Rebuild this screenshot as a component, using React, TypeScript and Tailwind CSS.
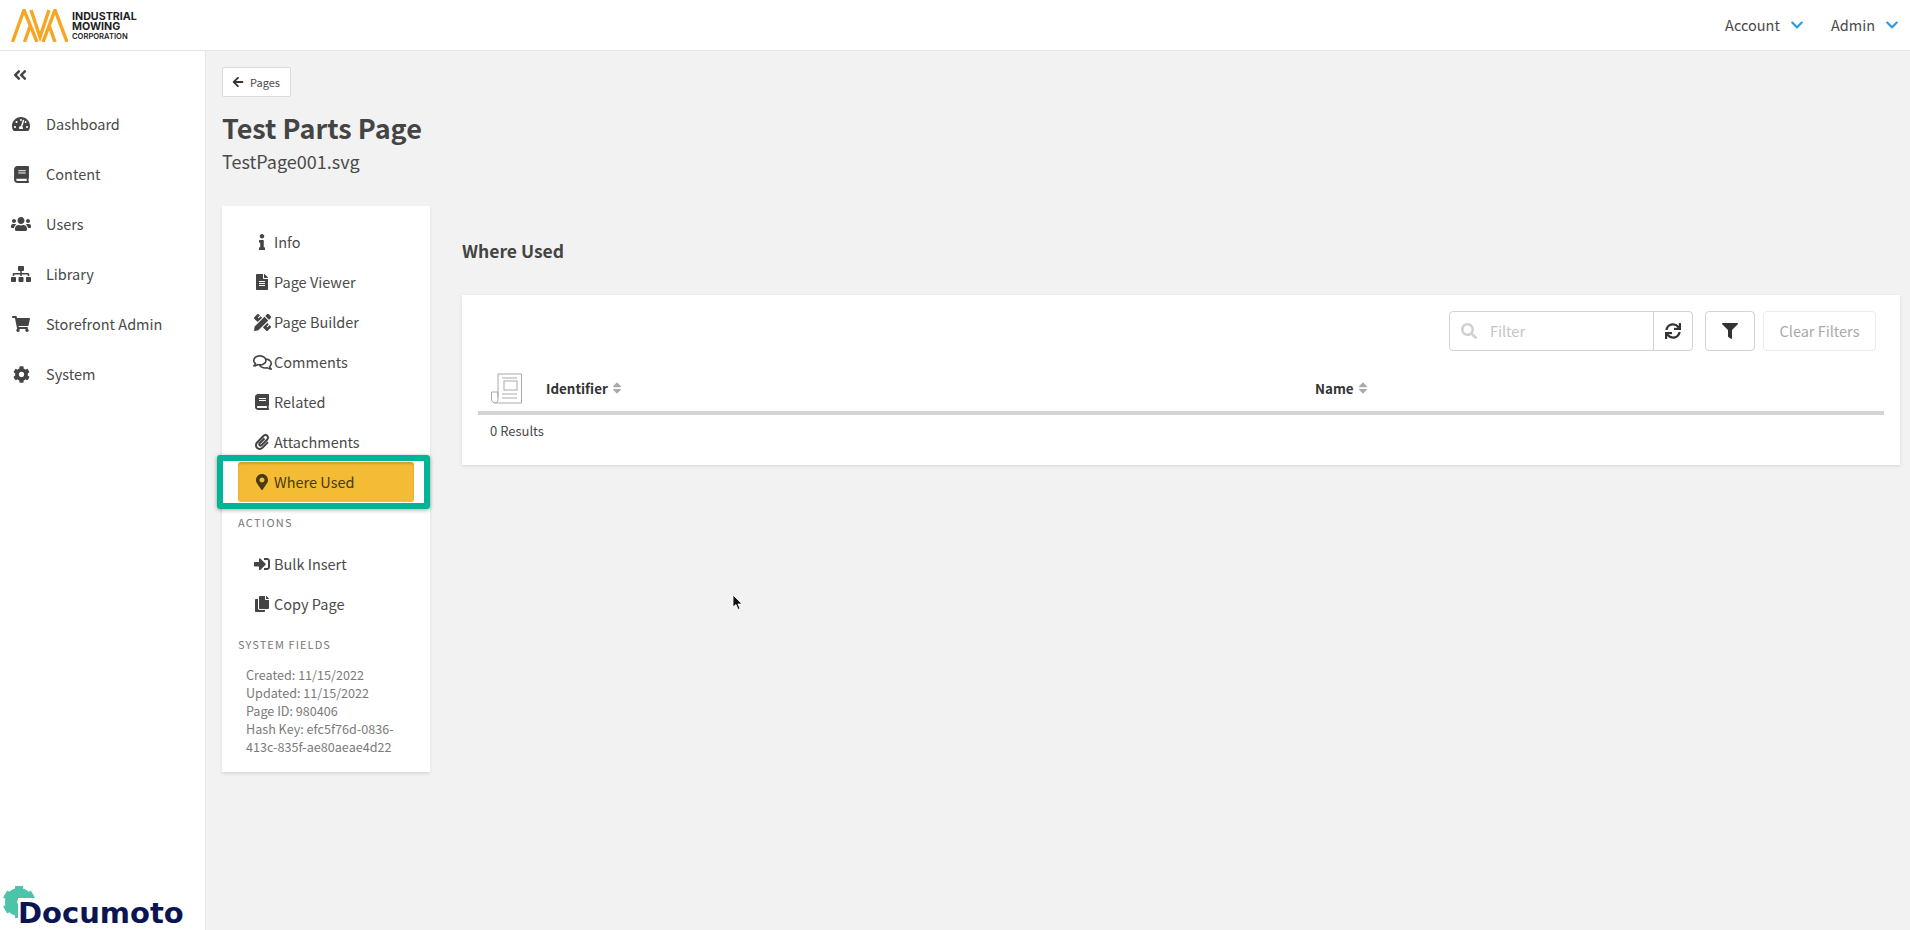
import React from "react"
import {
  FaAngleDoubleLeft,
  FaArrowLeft,
  FaBook,
  FaChevronDown,
  FaCog,
  FaCopy,
  FaFileAlt,
  FaFilter,
  FaInfo,
  FaMapMarkerAlt,
  FaPaperclip,
  FaPencilRuler,
  FaRegComments,
  FaSearch,
  FaShoppingCart,
  FaSignInAlt,
  FaSitemap,
  FaSort,
  FaSync,
  FaTachometerAlt,
  FaUsers,
} from "react-icons/fa"

const navItems = [
  { label: "Dashboard", icon: FaTachometerAlt, size: "text-[18px]" },
  { label: "Content", icon: FaBook, size: "text-[17px]" },
  { label: "Users", icon: FaUsers, size: "text-[20px]" },
  { label: "Library", icon: FaSitemap, size: "text-[20px]" },
  { label: "Storefront Admin", icon: FaShoppingCart, size: "text-[18px]" },
  { label: "System", icon: FaCog, size: "text-[17px]" },
]

const pageItems = [
  { label: "Info", icon: FaInfo, size: "text-[16px]" },
  { label: "Page Viewer", icon: FaFileAlt, size: "text-[16px]" },
  { label: "Page Builder", icon: FaPencilRuler, size: "text-[17px]" },
  { label: "Comments", icon: FaRegComments, size: "text-[19px]" },
  { label: "Related", icon: FaBook, size: "text-[16px]" },
  { label: "Attachments", icon: FaPaperclip, size: "text-[16px]" },
]

const MenuRow: React.FC<{ label: string; icon: React.ElementType; size: string }> = ({ label, icon: Icon, size }) => (
  <div className="flex h-10 items-center pl-[30px]">
    <span className="flex w-5 justify-center text-[#444]">
      <Icon className={size} />
    </span>
    <span className="ml-0.5 text-[14.5px] text-[#4a4a4a]">{label}</span>
  </div>
)

const IndustrialLogo = () => (
  <div className="ml-[11px] flex items-center">
    <svg width="57" height="33" viewBox="11 8 57 33" fill="none" stroke="#f5a623" strokeWidth="3.4">
      <path d="M12.5 41 L24 9 L37 41" />
      <path d="M24.5 41 L30.5 24" />
      <path d="M31 9 L40 36 L49 9" />
      <path d="M43 41 L55 9 L67 41" />
      <path d="M55 41 L49 24" />
    </svg>
    <div className="mt-[2px] ml-[4px] font-['Inter',sans-serif] text-[#222]">
      <div className="text-[10.7px] leading-[11px] font-bold">INDUSTRIAL</div>
      <div className="text-[10.7px] leading-[10px] font-bold">MOWING</div>
      <div className="text-[7.6px] leading-[9px] font-semibold">CORPORATION</div>
    </div>
  </div>
)

const DocumotoLogo = () => (
  <div className="relative ml-[18px] h-[34px]">
    <svg className="absolute top-[-11px] left-[-15px]" width="34" height="34" viewBox="0 0 34 34" fill="#4cc4a9">
      <circle cx="16" cy="17" r="8" fill="none" stroke="#4cc4a9" strokeWidth="12" />
      <rect x="12" y="1" width="8" height="5" />
      <rect x="12" y="1" width="8" height="5" transform="rotate(60 16 17)" />
      <rect x="12" y="1" width="8" height="5" transform="rotate(300 16 17)" />
      <rect x="12" y="1" width="8" height="5" transform="rotate(240 16 17)" />
      <rect x="12" y="1" width="8" height="5" transform="rotate(180 16 17)" />
      <rect x="15" y="13" width="19" height="21" fill="#fff" />
    </svg>
    <span className="relative font-['DejaVu_Sans',sans-serif] text-[29px] leading-[34px] font-bold text-[#0a1551]">
      Documoto
    </span>
  </div>
)

const App: React.FC = () => {
  return (
    <div className="flex h-screen flex-col overflow-hidden bg-[#f2f2f2] font-['Noto_Sans_CJK_SC',sans-serif] text-[#4a4a4a]">
      <header className="flex h-[51px] shrink-0 items-center justify-between border-b border-[#e5e5e5] bg-white">
        <IndustrialLogo />
        <div className="flex items-center pr-[11px] text-[14.5px]">
          <span>Account</span>
          <FaChevronDown className="mr-[27px] ml-[10px] text-[14px] text-[#2d9ce0]" />
          <span>Admin</span>
          <FaChevronDown className="ml-[10px] text-[14px] text-[#2d9ce0]" />
        </div>
      </header>

      <div className="flex min-h-0 flex-1">
        <aside className="flex w-[206px] shrink-0 flex-col justify-between border-r border-[#e8e8e8] bg-white">
          <div>
            <div className="flex h-12 items-center pl-[12px] text-[#444]">
              <FaAngleDoubleLeft className="text-[16px]" />
            </div>
            {navItems.map(({ label, icon: Icon, size }) => (
              <div key={label} className="flex h-[50px] items-center">
                <span className="flex w-[46px] pl-[11px] text-[#444]">
                  <span className="flex w-5 justify-center">
                    <Icon className={size} />
                  </span>
                </span>
                <span className="text-[14.5px]">{label}</span>
              </div>
            ))}
          </div>
          <DocumotoLogo />
        </aside>

        <main className="relative min-w-0 flex-1 pt-4 pr-[10px] pl-4">
          <button className="flex h-[30px] w-[69px] items-center gap-[6px] rounded-[2px] border border-[#dbdbdb] bg-white pl-[9px] text-[11px] text-[#4a4a4a]">
            <FaArrowLeft className="text-[12px] text-[#333]" />
            Pages
          </button>
          <h1 className="mt-[12px] text-[27px] leading-[38px] font-semibold text-[#444]">Test Parts Page</h1>
          <p className="mt-px text-[18px] leading-[27px]">TestPage001.svg</p>

          <div className="mt-[31px] flex items-start gap-[32px]">
            <div className="h-[566px] w-[208px] shrink-0 bg-white pt-4 shadow-[0_2px_3px_rgba(0,0,0,0.1)]">
              {pageItems.map((item) => (
                <MenuRow key={item.label} {...item} />
              ))}
              <div className="relative mx-4 flex h-10 items-center rounded-[3px] bg-[#f4bb35] pl-[14px] shadow-[inset_0_2px_2px_rgba(0,0,0,0.15)]">
                <span className="flex w-5 justify-center text-[#4a3a12]">
                  <FaMapMarkerAlt className="text-[16px]" />
                </span>
                <span className="ml-0.5 text-[14.5px] text-[#4a3a12]">Where Used</span>
                <div className="absolute -top-[7px] -right-4 -bottom-[7px] -left-[21px] rounded-[3px] border-[6px] border-[#02b496] shadow-[0_1px_4px_rgba(0,0,0,0.35)]" />
              </div>
              <div className="mt-[14px] pl-4 text-[11px] leading-[12px] tracking-[1.3px] text-[#777]">ACTIONS</div>
              <div className="mt-4">
                <MenuRow label="Bulk Insert" icon={FaSignInAlt} size="text-[16px]" />
                <MenuRow label="Copy Page" icon={FaCopy} size="text-[16px]" />
              </div>
              <div className="mt-[14px] pl-4 text-[11px] leading-[12px] tracking-[1.1px] text-[#777]">SYSTEM FIELDS</div>
              <div className="mt-4 pr-2 pl-6 text-[12.6px] leading-[18px] text-[#7a7a7a]">
                <div>Created: 11/15/2022</div>
                <div>Updated: 11/15/2022</div>
                <div>Page ID: 980406</div>
                <div>Hash Key: efc5f76d-0836-</div>
                <div>413c-835f-ae80aeae4d22</div>
              </div>
            </div>

            <section className="min-w-0 flex-1">
              <h2 className="mt-[31px] text-[17.5px] leading-7 font-semibold text-[#444]">Where Used</h2>
              <div className="mt-[30px] h-[170px] bg-white px-4 pt-4 shadow-[0_1px_3px_rgba(0,0,0,0.12)]">
                <div className="flex justify-end pr-2">
                  <div className="flex h-10 w-[244px] rounded-[4px] border border-[#d3d3d3]">
                    <div className="flex flex-1 items-center pl-[11px] text-[14.5px] text-[#c4c4c4]">
                      <FaSearch className="mr-[13px] text-[16px] text-[#d0d0d0]" />
                      Filter
                    </div>
                    <div className="flex w-[39px] items-center justify-center border-l border-[#d3d3d3] text-[#333]">
                      <FaSync className="text-[16px]" />
                    </div>
                  </div>
                  <div className="ml-3 flex h-10 w-[50px] items-center justify-center rounded-[4px] border border-[#d3d3d3] text-[#333]">
                    <FaFilter className="text-[16px]" />
                  </div>
                  <div className="ml-2 flex h-10 w-[113px] items-center justify-center rounded-[4px] border border-[#ebebeb] text-[14.5px] text-[#a8a8a8]">
                    Clear Filters
                  </div>
                </div>
                <div className="mt-[20px] flex h-[44px] items-center border-b-4 border-[#d4d4d4] pb-[6px]">
                  <svg className="ml-3 shrink-0" width="33" height="33" viewBox="0 0 33 33" fill="none" stroke="#a9a9a9" strokeWidth="1">
                    <path d="M8 25 V2 H31.5 V31 H6 C3 31 1.5 29.5 1.5 27 V20 H8 V27 C8 29.5 7 31 5 31" />
                    <path d="M12 6 H27 M12 22 H27 M12 26 H27" />
                    <rect x="14" y="9" width="13" height="9" />
                  </svg>
                  <span className="ml-[23px] flex w-[769px] items-center gap-[2px] text-[13.4px] font-semibold text-[#333]">
                    Identifier
                    <FaSort className="text-[14px] text-[#aaa]" />
                  </span>
                  <span className="flex items-center gap-[2px] text-[13.4px] font-semibold text-[#333]">
                    Name
                    <FaSort className="text-[14px] text-[#aaa]" />
                  </span>
                </div>
                <div className="mt-[6px] pl-3 text-[13px] leading-5">0 Results</div>
              </div>
            </section>
          </div>

          {/* mouse pointer from the recording */}
          <svg className="absolute top-[543px] left-[526px]" width="11" height="17" viewBox="0 0 11 17">
            <path d="M1 1 L1 13 L4 10.5 L6 15.5 L8 14.5 L6 10 L10 10 Z" fill="#111" stroke="#fff" strokeWidth="0.8" />
          </svg>
        </main>
      </div>
    </div>
  )
}

export default App
